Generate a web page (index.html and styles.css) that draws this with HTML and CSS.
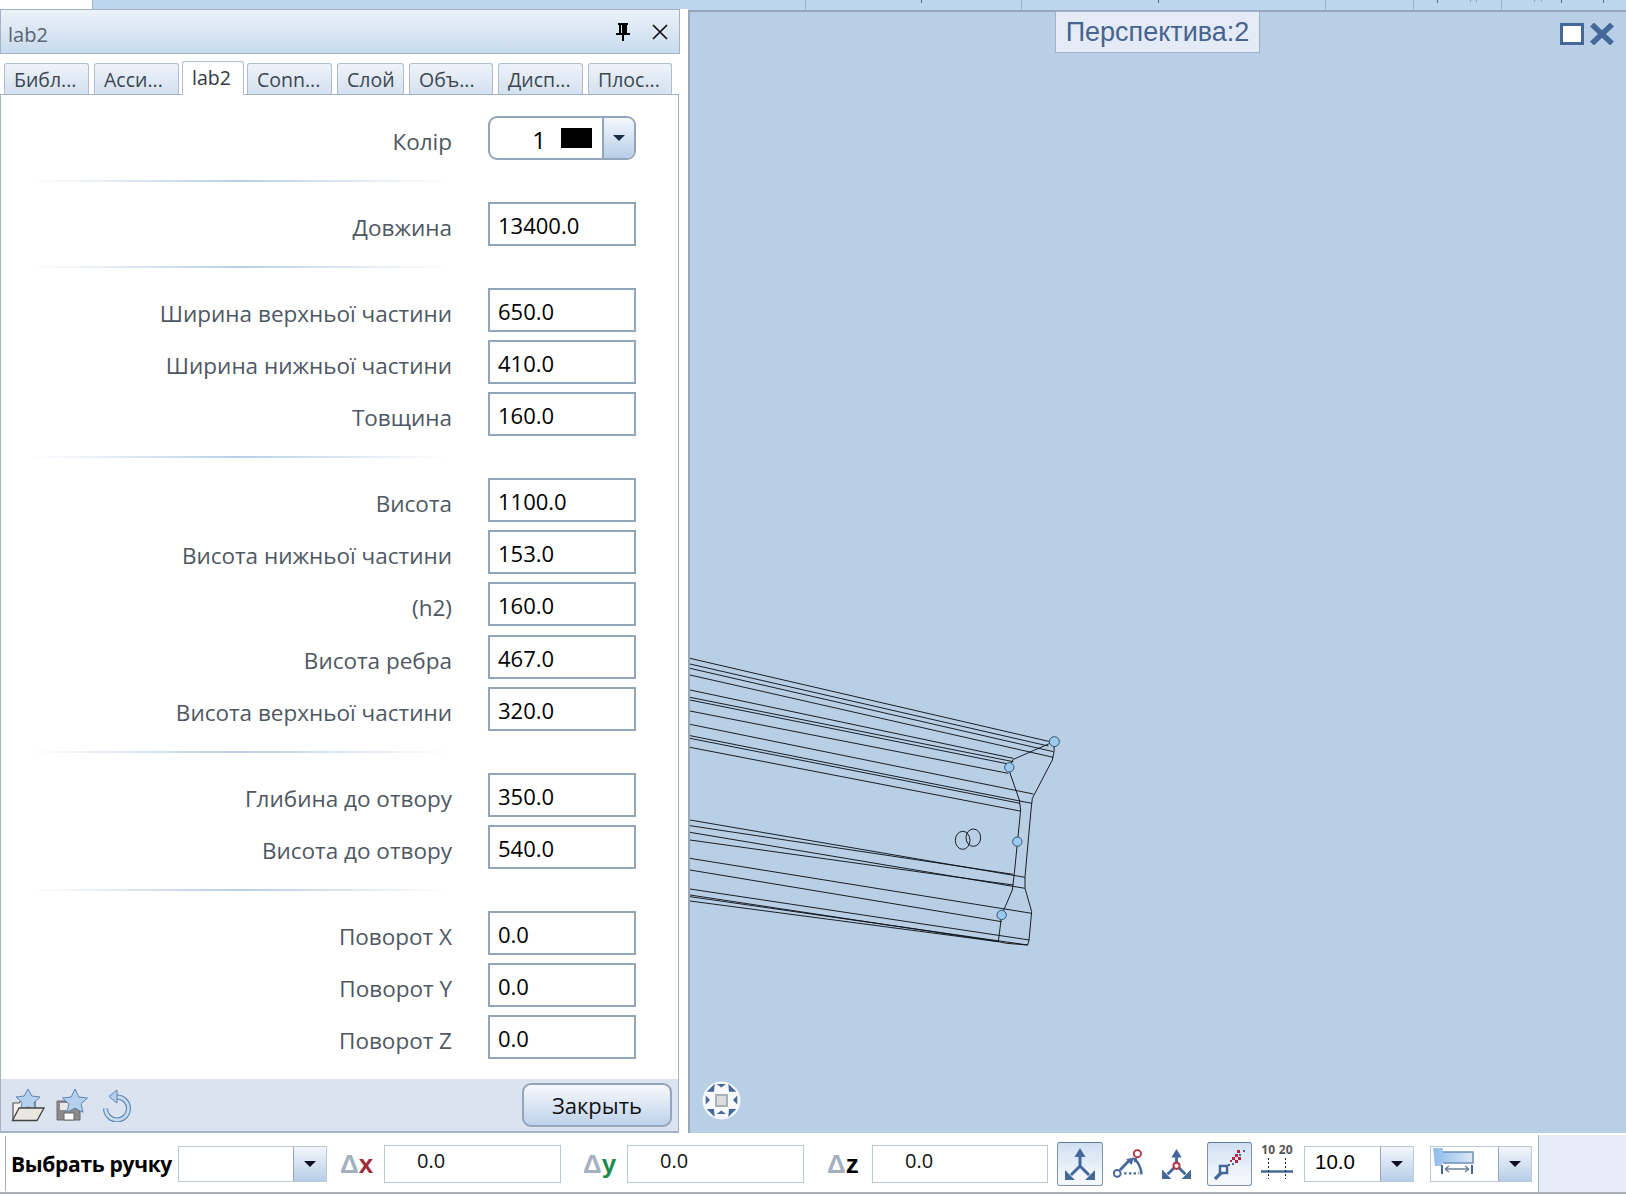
FILE: index.html
```html
<!DOCTYPE html>
<html lang="uk">
<head>
<meta charset="utf-8">
<title>lab2</title>
<link rel="stylesheet" href="styles.css">
</head>
<body>
<div class="app">
  <div class="topstrip">
    <div class="ts-white"></div>
    <div class="ts-cell c713"></div>
    <div class="ts-cell c216"><i class="bit m115"></i></div>
    <div class="ts-cell c304"><i class="bit m136"></i></div>
    <div class="ts-cell c89"></div>
    <div class="ts-cell c88"><i class="bit m23"></i><i class="bit faint m32"></i><i class="bit faint m5"></i></div>
    <div class="ts-cell last"><i class="bit faint m32"></i><i class="bit faint m6"></i><i class="bit m19"></i><i class="bit m41"></i></div>
  </div>
  <div class="main">
    <aside class="panel">
      <header class="titlebar">
        <span class="title">lab2</span>
        <svg class="pin" width="14" height="18" viewBox="0 0 14 18"><path d="M2 0h10v2h-1v8h3v2H8v6H6v-6H0v-2h3V2H2z M5 2v8h1V2z" fill="#000" fill-rule="evenodd"/></svg>
        <svg class="close" width="16" height="16" viewBox="0 0 16 16"><path d="M1 1l14 14M15 1L1 15" stroke="#111" stroke-width="1.700" fill="none"/></svg>
      </header>
      <nav class="tabs">
        <span class="tab w85">Библ...</span>
        <span class="tab w85">Асси...</span>
        <span class="tab active">lab2</span>
        <span class="tab w85">Conn...</span>
        <span class="tab w67">Слой</span>
        <span class="tab w84">Объ...</span>
        <span class="tab w85">Дисп...</span>
        <span class="tab w84">Плос...</span>
      </nav>
      <div class="form">
        <div class="row"><label>Колір</label>
          <div class="colorbox"><span class="cnum">1</span><span class="swatch"></span><span class="cdrop"><i class="arrow"></i></span></div>
        </div>
        <div class="sep"></div>
        <div class="row"><label>Довжина</label><div class="val">13400.0</div></div>
        <div class="sep"></div>
        <div class="row"><label>Ширина верхньої частини</label><div class="val">650.0</div></div>
        <div class="row"><label>Ширина нижньої частини</label><div class="val">410.0</div></div>
        <div class="row"><label>Товщина</label><div class="val">160.0</div></div>
        <div class="sep"></div>
        <div class="row"><label>Висота</label><div class="val">1100.0</div></div>
        <div class="row"><label>Висота нижньої частини</label><div class="val">153.0</div></div>
        <div class="row tall"><label>(h2)</label><div class="val">160.0</div></div>
        <div class="row"><label>Висота ребра</label><div class="val">467.0</div></div>
        <div class="row"><label>Висота верхньої частини</label><div class="val">320.0</div></div>
        <div class="sep"></div>
        <div class="row"><label>Глибина до отвору</label><div class="val">350.0</div></div>
        <div class="row"><label>Висота до отвору</label><div class="val">540.0</div></div>
        <div class="sep"></div>
        <div class="row"><label>Поворот X</label><div class="val">0.0</div></div>
        <div class="row"><label>Поворот Y</label><div class="val">0.0</div></div>
        <div class="row"><label>Поворот Z</label><div class="val">0.0</div></div>
      </div>
      <footer class="panelfoot">
        <svg class="ficon" width="34" height="34" viewBox="0 0 34 34">
          <path d="M2 32V15h6l2-2h14v7" fill="#f4f3ec" stroke="#555" stroke-width="1.200"/>
          <path d="M17 1l3.800 7 8.200 1-6 5.500 1.600 8-7.600-3.800-7.600 3.800 1.600-8-6-5.500 8.200-1z" fill="#b5d0ec" stroke="#5d85b5"/>
          <path d="M1.500 32.500L8 20h25l-7 12.500z" fill="#e9e8e0" stroke="#444" stroke-width="1.300"/>
        </svg>
        <svg class="ficon" width="35" height="34" viewBox="0 0 35 34">
          <path d="M1 13h18l5 5v14H1z" fill="#8a8a8a" stroke="#6a6a6a"/>
          <path d="M4 15h11v7H4z" fill="#e8e8e8"/><path d="M8 25h10v7H8z" fill="#fff" stroke="#6a6a6a"/>
          <path d="M19 1l3.800 8 8.700 1-6.400 5.800 1.800 8.500-7.900-4.300-7.900 4.300 1.800-8.500L6.500 10l8.700-1z" fill="#b5d0ec" stroke="#5d85b5"/>
        </svg>
        <svg class="ficon" width="30" height="34" viewBox="0 0 30 34">
          <path d="M15 9A11.500 11.500 0 1 1 3.500 20.500" fill="none" stroke="#5d85b5" stroke-width="5"/>
          <path d="M15 9A11.500 11.500 0 1 1 3.500 20.500" fill="none" stroke="#c8dcf1" stroke-width="2.800"/>
          <path d="M7 8.500L15 2v13z" fill="#b5d0ec" stroke="#5d85b5"/>
        </svg>
        <span class="closebtn">Закрыть</span>
      </footer>
    </aside>
    <section class="view">
      <div class="viewtitle">Перспектива:2</div>
      <div class="winbtns">
        <svg width="24" height="22" viewBox="0 0 24 22"><rect x="1.500" y="1.500" width="21" height="19" fill="#fff" stroke="#44689a" stroke-width="3"/></svg>
        <svg width="24" height="22" viewBox="0 0 24 22"><path d="M2 1.500l20 19M22 1.500l-20 19" stroke="#44689a" stroke-width="5.500" fill="none"/></svg>
      </div>
      <svg class="model" width="390" height="320" viewBox="30 0 1170 960" fill="none" stroke="#0c1118" stroke-width="2.800">
        <path d="M30 55L1110 305M30 72L1105 318M30 85L1120 335M30 105L1120 352"/>
        <path d="M30 150L1000 355M30 172L1000 365M30 180L985 372M30 213L985 400"/>
        <path d="M30 253L1060 462M30 287L1055 490M30 295L1020 490M30 322L1020 513"/>
        <path d="M30 540L1035 712M30 557L1000 703M30 577L1035 745M30 600L1000 735"/>
        <path d="M30 655L1055 820M30 690L965 845M30 747L1048 900M30 765L955 905M30 770L1043 915M30 783L955 905"/>
        <path d="M1123 305L1122 335L1117 360L1057 475L1053 510L1035 710L1035 745L1055 815L1047 900L1043 915L980 910L955 905"/>
        <path d="M1110 310L1000 358L985 385L1018 480L1022 510L1003 700L997 750L965 825L955 905"/>
        <ellipse cx="848" cy="601" rx="22" ry="27"/><ellipse cx="880" cy="593" rx="22" ry="26"/>
        <g fill="#9cc9ee" stroke="#2e4a66">
          <circle cx="1123" cy="305" r="15"/><circle cx="988" cy="382" r="14"/><circle cx="1012" cy="605" r="14"/><circle cx="965" cy="825" r="14"/>
        </g>
      </svg>
      <svg class="navwheel" width="42" height="42" viewBox="0 0 42 42">
        <circle cx="20.500" cy="20.500" r="19" fill="#f6f8fb"/>
        <rect x="15" y="15" width="11" height="11" fill="#dcdcdc" stroke="#a9b0b8" stroke-width="2"/>
        <path d="M15.700 4H25L20.300 7.500zM15.700 34H25L20.300 30.500zM4.700 15.500v9L9 20zM36.300 15.500v9L32 20zM13.700 3.700L5.700 11.700H13zM27.300 3.700L35.300 11.700H28zM13.700 37L5.700 29H13zM27.300 37L35.300 29H28z" fill="#44689a"/>
      </svg>
    </section>
  </div>
  <div class="statusbar">
    <span class="sblabel">Выбрать ручку</span>
    <div class="combo c1"><span class="ctext"></span><span class="drop"><i class="arrow dark"></i></span></div>
    <span class="delta dx"><i>Δ</i><b>x</b></span>
    <div class="num n1">0.0</div>
    <span class="delta dy"><i>Δ</i><b>y</b></span>
    <div class="num n1">0.0</div>
    <span class="delta dz"><i>Δ</i><b>z</b></span>
    <div class="num n2">0.0</div>
    <span class="tool on tool1">
      <svg width="30" height="32" viewBox="0 0 30 32"><path d="M15 8v11M15 18L6 27M15 18l9 9" stroke="#44689a" stroke-width="3" fill="none"/><path d="M15 0l-5.500 9h11zM0 32v-10l10 10zM30 32V22L20 32z" fill="#44689a"/></svg>
    </span>
    <span class="tool tool2">
      <svg width="32" height="32" viewBox="0 0 32 32"><path d="M7.500 22.500L17.500 12" stroke="#44689a" stroke-width="3"/><path d="M22 9l-8 2 6 6z" fill="#44689a"/><path d="M23 10.500c4 4 7 10 7.500 16.500" stroke="#44689a" stroke-width="2.500" fill="none"/><path d="M21 9l5 1-3 5z" fill="#44689a"/><circle cx="26" cy="5" r="3.800" fill="#fff" stroke="#b33045" stroke-width="2"/><circle cx="4.500" cy="26" r="3.600" fill="#fff" stroke="#44689a" stroke-width="2"/><path d="M12 26h16" stroke="#44689a" stroke-width="2.500" stroke-dasharray="2.500 2.500"/></svg>
    </span>
    <span class="tool tool3">
      <svg width="31" height="32" viewBox="0 0 31 32"><path d="M15.500 8v10M13 20L6 27M18 20l7 7" stroke="#44689a" stroke-width="3" fill="none"/><path d="M15.500 0l-5.500 9h11zM0 32v-10l10 10zM31 32V22L21 32z" fill="#44689a"/><circle cx="15.500" cy="18" r="3.300" fill="#fff" stroke="#b33045" stroke-width="2"/></svg>
    </span>
    <span class="tool on tool4">
      <svg width="43" height="42" viewBox="0 0 43 42"><path d="M12 23h7v7h-7z" fill="#fff" stroke="#44689a" stroke-width="2.500"/><path d="M13 30l-6 6" stroke="#44689a" stroke-width="3.200"/><path d="M24 14h3v3h-3zM27 11h3v3h-3zM30 14h3v3h-3zM27 17h3v3h-3zM22 17h2v2h-2zM29 7h3v3h-3z" fill="#b8243a"/><path d="M35 7h2v2h-2zM31 11h2v2h-2zM20 21h2v2h-2zM24 20h2v2h-2z" fill="#44689a"/></svg>
    </span>
    <span class="scale"><span class="scalenums">10 20</span><svg width="32" height="21" viewBox="0 0 32 21"><path d="M0 13.500h32" stroke="#44689a" stroke-width="2.500"/><path d="M7.500 0v21M24.500 0v21" stroke="#222" stroke-dasharray="2 2"/></svg></span>
    <div class="combo c2"><span class="ctext">10.0</span><span class="drop"><i class="arrow dark"></i></span></div>
    <div class="combo c3"><span class="ctext"><svg width="41" height="26" viewBox="0 0 41 26"><defs><linearGradient id="beam" x1="0" x2="1" y1="0" y2="0"><stop offset="0" stop-color="#8fbcec"/><stop offset="1" stop-color="#dbe8f5"/></linearGradient></defs><path d="M0 0h10v4h30v11H9v3H2z" fill="url(#beam)"/><path d="M10 4h30v11H10" fill="none" stroke="#6d90ba" stroke-width="1.500"/><path d="M9 17v9M39 17v9" stroke="#44689a" stroke-width="2"/><path d="M12 21h24M12 21l4-3M12 21l4 3M36 21l-4-3M36 21l-4 3" stroke="#6d7f96" stroke-width="1.500" fill="none"/></svg></span><span class="drop"><i class="arrow dark"></i></span></div>
    <div class="sbend"></div>
  </div>
</div>
</body>
</html>
```
FILE: styles.css
```css
* { box-sizing: border-box; }
html, body { margin: 0; padding: 0; }
body { width: 1626px; height: 1196px; overflow: hidden; background: #fff; font-family: "Open Sans", "Noto Sans", "Liberation Sans", sans-serif; }
.app { display: flex; flex-direction: column; width: 1626px; height: 1196px; }

.topstrip { display: flex; height: 10px; flex: none; background: #bcd6ef; }
.ts-white { width: 93px; background: #fff; border-right: 1px solid #a9b6c6; }
.ts-cell { height: 10px; border-right: 1px solid #a3b3c6; display: flex; align-items: flex-start; }
.c713 { width: 713px; } .c216 { width: 216px; } .c304 { width: 304px; } .c89 { width: 88px; } .c88 { width: 88px; }
.last { flex: 1; border-right: none; }
.bit { display: block; flex: none; width: 1px; height: 3px; background: #5b6b7e; }
.bit.faint { background: #8fa3b8; height: 2px; }
.m115 { margin-left: 115px; } .m136 { margin-left: 136px; } .m23 { margin-left: 23px; } .m32 { margin-left: 32px; } .m5 { margin-left: 5px; } .m6 { margin-left: 6px; } .m19 { margin-left: 19px; } .m41 { margin-left: 41px; }

.main { display: flex; flex: none; height: 1123px; }

.panel { width: 688px; flex: none; display: flex; flex-direction: column; background: #fff; margin-top: -1px; position: relative; }
.titlebar { width: 680px; height: 45px; flex: none; display: flex; align-items: center; background: linear-gradient(#ecf2f9, #c9dbef); border: 1px solid #a3b2c4; }
.title { flex: 1; padding-left: 7px; font-size: 20px; color: #5b6470; padding-top: 6px; }
.pin { margin-right: 22px; }
.close { margin-right: 11px; }

.tabs { width: 679px; height: 40px; flex: none; display: flex; align-items: flex-end; gap: 5px; padding-left: 4px; }
.tab { height: 31px; display: flex; align-items: center; padding-left: 9px; font-size: 19.500px; color: #3d4650; background: linear-gradient(#eef3f9, #d4e1f0); border: 1px solid #b0bdcd; border-bottom: none; border-radius: 3px 3px 0 0; white-space: nowrap; overflow: hidden; }
.w85 { width: 85px; } .w84 { width: 84px; } .w67 { width: 67px; }
.tab.active { width: 62px; height: 34px; margin: 0 -2px -1px -2px; background: #fff; color: #33383f; position: relative; z-index: 1; padding-bottom: 2px; }

.form { width: 679px; flex: 1; min-height: 0; border: 1px solid #a3b2c4; border-bottom: none; padding-top: 17px; }
.row { display: flex; align-items: center; height: 52px; }
.row.tall { margin-bottom: 1px; }
.row label { width: 451px; text-align: right; font-size: 22.500px; color: #4e5762; padding-top: 6px; white-space: nowrap; }
.val, .colorbox { margin-left: 36px; width: 148px; height: 44px; border: 2px solid #93a5ba; background: #fff; }
.val { font-size: 22px; color: #000; padding: 2px 0 0 8px; display: flex; align-items: center; }
.sep { height: 2px; width: 424px; margin: 16px 0 16px 26px; background: linear-gradient(90deg, rgba(185,207,232,0), #b9cfe8 50%, rgba(185,207,232,0)); }
.colorbox { display: flex; align-items: stretch; border-radius: 9px; overflow: hidden; }
.cnum { width: 56px; text-align: right; font-size: 24px; line-height: 44px; color: #000; }
.swatch { width: 31px; height: 20px; background: #000; margin: 10px 0 0 15px; }
.cdrop { margin-left: 10px; flex: 1; border-left: 2px solid #93a5ba; background: linear-gradient(#f5f8fc, #b7cee8); display: flex; align-items: center; justify-content: center; }
.arrow { display: block; width: 0; height: 0; border-left: 6px solid transparent; border-right: 6px solid transparent; border-top: 6px solid #1c2c44; }
.arrow.dark { border-top-color: #120e22; }

.panelfoot { width: 679px; height: 54px; flex: none; display: flex; align-items: center; gap: 11px; background: #dae3ef; border: 1px solid #a3b2c4; border-top: none; border-bottom: 2px solid #a3b2c4; padding: 0 6px 0 10px; }
.ficon { flex: none; }
.closebtn { margin-left: auto; width: 150px; height: 44px; display: flex; align-items: center; justify-content: center; font-size: 22px; color: #111; border: 2px solid #93a5ba; border-radius: 9px; background: linear-gradient(#f7f9fc, #bed2ea); }

.view { flex: 1; position: relative; background: #b9cfe6; border-left: 2px solid #9aa7b8; border-top: 2px solid #97a6b8; }
.viewtitle { position: absolute; left: 365px; top: -1px; width: 205px; height: 42px; display: flex; align-items: center; justify-content: center; background: #e4eaf6; border: 1px solid #9fb2c8; font-family: "Liberation Sans", sans-serif; font-size: 27px; color: #46648f; }
.winbtns { position: absolute; right: 12px; top: 11px; display: flex; gap: 6px; }
.model { position: absolute; left: 0; top: 628px; }
.navwheel { position: absolute; left: 11px; top: 1068px; }

.statusbar { flex: none; height: 61px; display: flex; align-items: center; background: #fff; border-bottom: 2px solid #a9b0b8; position: relative; padding: 2px 0 0 11px; }
.statusbar::before { content: ""; position: absolute; left: 5px; top: 3px; bottom: 1px; width: 1px; background: #a9b0b8; }
.sblabel { font-size: 21px; font-weight: 700; color: #000; width: 167px; white-space: nowrap; letter-spacing: -.3px; }
.combo { display: flex; height: 36px; border: 1px solid #bac8d8; background: #fff; flex: none; }
.c1 { width: 149px; }
.ctext { flex: 1; display: flex; align-items: center; }
.drop { width: 33px; border-left: 1px solid #93a5ba; background: linear-gradient(#f2f6fb, #b7cee8); display: flex; align-items: center; justify-content: center; }
.delta { display: flex; font-size: 26px; font-weight: 700; align-items: baseline; line-height: 36px; flex: none; font-family: "Liberation Sans", sans-serif; }
.delta i { font-style: normal; color: #a3b0be; }
.delta b { font-weight: 700; }
.dx b { color: #a32a3c; } .dy b { color: #1a8a4a; } .dz b { color: #000; }
.dx { width: 32px; margin: 0 12px 0 13px; }
.dy { width: 30px; margin: 0 14px 0 22px; }
.dz { width: 31px; margin: 0 14px 0 23px; }
.num { height: 38px; border: 1px solid #bac8d8; font-size: 20px; line-height: 30px; padding-left: 32px; color: #111; flex: none; }
.n1 { width: 177px; } .n2 { width: 176px; }
.tool { height: 44px; display: flex; align-items: center; justify-content: center; flex: none; border: 1px solid transparent; }
.tool.on { background: linear-gradient(#cfe0f3, #f3f7fb 80%); border: 1px solid #7e95b2; border-top-color: #5f7997; border-radius: 3px; }
.tool1 { width: 46px; margin-left: 9px; }
.tool2 { width: 32px; margin-left: 9px; }
.tool3 { width: 31px; margin-left: 17px; }
.tool4 { width: 45px; margin-left: 15px; }
.scale { width: 32px; height: 44px; display: flex; flex-direction: column; align-items: center; flex: none; margin-left: 9px; }
.scalenums { font-size: 12px; font-weight: 700; color: #555; white-space: nowrap; line-height: 16px; height: 16px; letter-spacing: .2px; }
.c2 { width: 110px; margin-left: 11px; }
.c2 .ctext { font-family: "Liberation Sans", sans-serif; font-size: 20.500px; color: #000; padding: 0 0 3px 10px; }
.c3 { width: 102px; margin-left: 16px; }
.c3 .ctext { padding: 0 0 6px 2px; }
.sbend { position: absolute; right: 0; top: 2px; bottom: 0; width: 88px; background: #e5ecf5; border-left: 1px solid #a9b0b8; }
```
